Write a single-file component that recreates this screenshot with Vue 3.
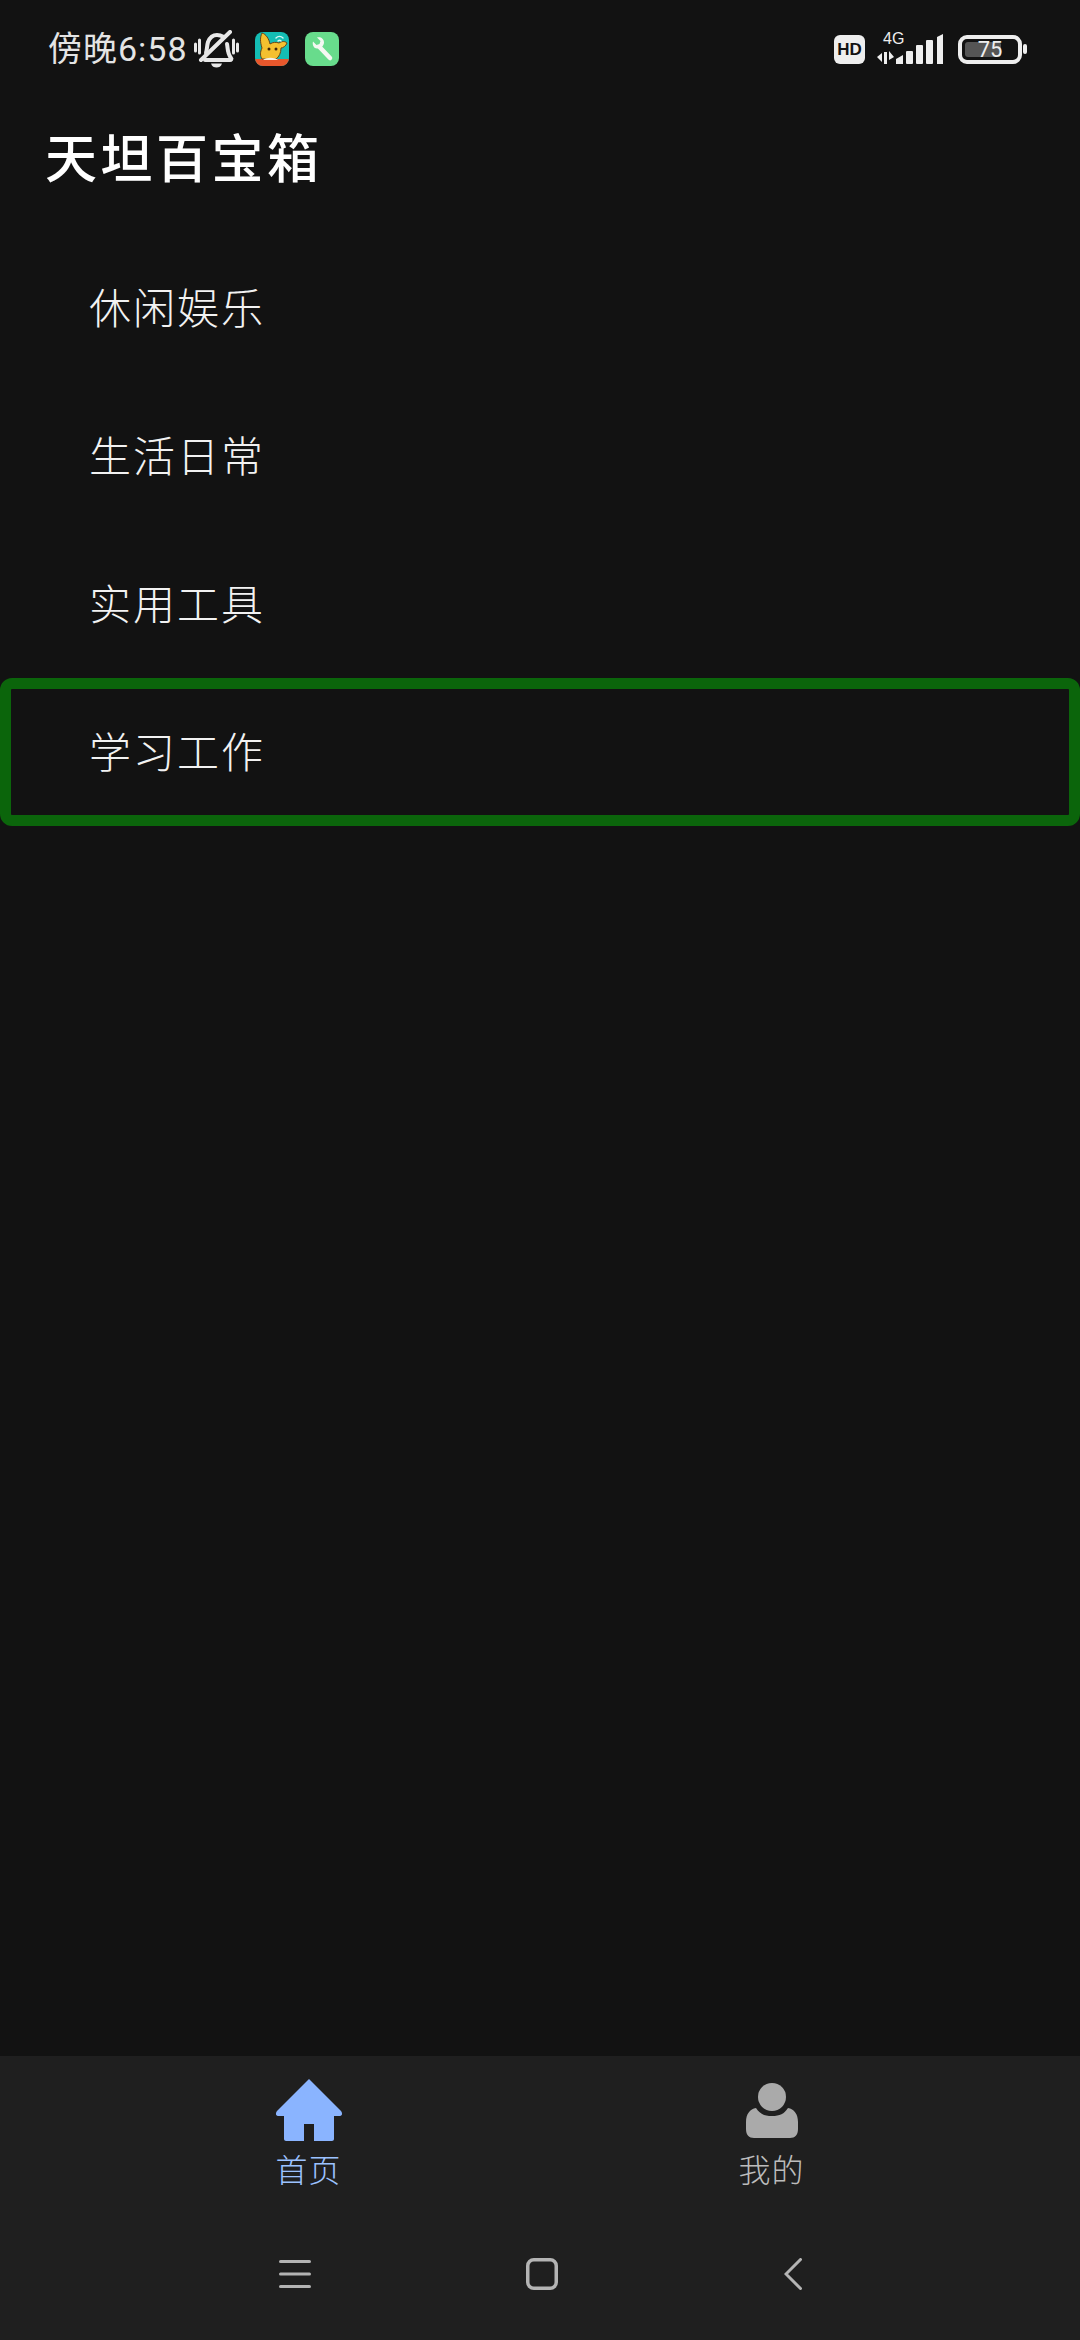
<template>
  <div class="page">
    <div class="status-bar">
      <div class="status-left">
        <span class="time">傍晚6:58</span>
        <svg class="bell" width="45" height="38" viewBox="0 0 45 38" fill="none" stroke="#e8e8e8">
          <path d="M1.500 14v7M5.500 10v13M39.500 10v13M43.500 14v7" stroke-width="3" stroke-linecap="round" />
          <path d="M12 23c1-3 1-8 2-11 2-5 6-7 9-7 3 0 5 1 7 2M33 14c1 4 0 9 4 14 1 1 0 2-1 2H11" stroke-width="4" stroke-linecap="round" stroke-linejoin="round" />
          <path d="M7 30 36 2" stroke-width="4" stroke-linecap="round" />
          <path d="M17 33.500h11c-1 3-3 4-5.500 4s-4.500-1-5.500-4z" fill="#e8e8e8" stroke="none" />
        </svg>
        <svg class="app-icon" width="34" height="34" viewBox="0 0 34 34">
          <defs>
            <clipPath id="appClip"><rect width="34" height="34" rx="8" /></clipPath>
          </defs>
          <g clip-path="url(#appClip)">
            <rect width="34" height="34" fill="#14bdb4" />
            <path d="M0 27h34v7H0z" fill="#e8572c" />
            <path d="M7 1c4 1 7 6 8 11 3-2 6-2 9-1 3-2 6-2 8 0-1 3-4 5-6 5 0 5-2 9-5 11H7c-2-3-2-7 0-11C5 10 5 5 7 1z" fill="#f4c02f" stroke="#6b4216" stroke-width="1" />
            <path d="M8 28c3-3 12-3 15 0z" fill="#f7eee0" />
            <circle cx="14" cy="17" r="1.500" fill="#40260c" />
            <circle cx="21" cy="17" r="1.500" fill="#40260c" />
            <path d="M21 6c2-2 5-2 7 0M23 9c1-1 2-1 3 0" fill="none" stroke="#d6f6f2" stroke-width="1.500" stroke-linecap="round" />
          </g>
        </svg>
        <svg class="app-icon" width="34" height="34" viewBox="0 0 34 34">
          <rect width="34" height="34" rx="8" fill="#68dc8c" />
          <path d="M25 26 15 15.500" stroke="#f4f8f2" stroke-width="4.500" stroke-linecap="round" />
          <path d="M8 9.500l3.500 3.500 3-1 1-3-3.500-3.500c3.500-1 7 1 7 5 0 3-3 7-7 6-3 0-5-3.500-4-7z" fill="#f4f8f2" />
        </svg>
      </div>
      <div class="status-right">
        <div class="hd">HD</div>
        <div class="signal">
          <span class="net">4G</span>
          <svg width="67" height="30" viewBox="0 0 67 30" fill="#eeeeee">
            <path d="M0 23l5-4v9zM7 18h3v12H7zM12 17l5 6-5 3z" />
            <path d="M19 25l7-4v9h-7z" />
            <rect x="29" y="17" width="7" height="13" rx="1" />
            <rect x="39" y="11" width="7" height="19" rx="1" />
            <rect x="49" y="6" width="7" height="24" rx="1" />
            <path d="M60 3l6-3v30h-6z" />
          </svg>
        </div>
        <div class="battery">
          <div class="battery-body">
            <div class="battery-fill"></div>
            <span class="battery-num">75</span>
          </div>
          <div class="battery-tip"></div>
        </div>
      </div>
    </div>

    <h1 class="title">天坦百宝箱</h1>

    <div class="list">
      <div
        v-for="item in items"
        :key="item.name"
        :class="['row', { focused: item.focused }]"
      >
        {{ item.name }}
      </div>
    </div>

    <div class="bottom">
      <div class="tabs">
        <div class="tab active">
          <svg width="68" height="66" viewBox="0 0 68 66">
            <path d="M34 1 66 33c2 3 1 5-2 5h-5v23c0 1-1 2-2 2H39V46H29v17H11c-1 0-2-1-2-2V38H4c-3 0-4-2-2-5z" fill="#8ab4ff" />
          </svg>
          <span>首页</span>
        </div>
        <div class="tab">
          <svg width="68" height="66" viewBox="0 0 68 66">
            <path d="M18 30c4 6 8 8 16 8s12-2 16-8c6 1 10 6 10 14v7c0 6-3 9-8 9H16c-5 0-8-3-8-9v-7c0-8 4-13 10-14z" fill="#aaaaaa" />
            <circle cx="34" cy="19" r="14" fill="#aaaaaa" />
          </svg>
          <span>我的</span>
        </div>
      </div>
      <div class="nav">
        <svg width="32" height="28" viewBox="0 0 32 28" fill="#b4b4b4">
          <rect y="0" width="32" height="3" rx="1.500" />
          <rect y="12.500" width="32" height="3" rx="1.500" />
          <rect y="25" width="32" height="3" rx="1.500" />
        </svg>
        <svg width="32" height="32" viewBox="0 0 32 32" fill="none" stroke="#b4b4b4" stroke-width="3.500">
          <rect x="1.750" y="1.750" width="28.500" height="28.500" rx="6" />
        </svg>
        <svg width="18" height="32" viewBox="0 0 18 32" fill="none" stroke="#b4b4b4" stroke-width="3" stroke-linecap="round">
          <path d="M16.500 1.500 2 16l14.500 14.500" />
        </svg>
      </div>
    </div>
  </div>
</template>

<script setup>
import { ref } from 'vue';

const items = ref([
  { name: '休闲娱乐' },
  { name: '生活日常' },
  { name: '实用工具' },
  { name: '学习工作', focused: true },
]);
</script>

<style scoped>
.page {
  display: flex;
  flex-direction: column;
  width: 1080px;
  height: 2340px;
  overflow: hidden;
  background: #121212;
  color: #e6e6e6;
  font-family: "Noto Sans CJK SC", "Noto Sans", sans-serif;
}

.status-bar {
  display: flex;
  justify-content: space-between;
  align-items: center;
  height: 98px;
  padding: 0 53px 0 48px;
  box-sizing: border-box;
  flex-shrink: 0;
}

.status-left,
.status-right {
  display: flex;
  align-items: center;
}

.time {
  font-family: Roboto, "Noto Sans CJK SC", sans-serif;
  font-size: 34px;
  line-height: 40px;
  letter-spacing: 1px;
  color: #e4e4e4;
}

.bell {
  margin-left: 6px;
}

.app-icon {
  margin-left: 16px;
}

.hd {
  width: 31px;
  height: 29px;
  border-radius: 6px;
  background: #eeeeee;
  color: #121212;
  font-size: 17px;
  font-weight: 900;
  line-height: 29px;
  text-align: center;
  font-family: "Liberation Sans", sans-serif;
}

.signal {
  position: relative;
  width: 67px;
  height: 30px;
  margin-left: 12px;
}

.signal svg {
  display: block;
}

.net {
  position: absolute;
  left: 6px;
  top: -3px;
  font-size: 16px;
  line-height: 16px;
  color: #eeeeee;
  font-family: "Liberation Sans", sans-serif;
}

.battery {
  display: flex;
  align-items: center;
  margin-left: 14px;
}

.battery-body {
  position: relative;
  width: 64px;
  height: 29px;
  border: 4px solid #eeeeee;
  border-radius: 9px;
  box-sizing: border-box;
}

.battery-fill {
  width: 36px;
  height: 15px;
  margin: 3px 0 0 3px;
  border-radius: 3px;
  background: #555555;
}

.battery-num {
  position: absolute;
  inset: 0;
  font-size: 22px;
  line-height: 21px;
  text-align: center;
  color: #eeeeee;
  font-family: "Roboto", sans-serif;
}

.battery-tip {
  width: 4px;
  height: 10px;
  margin-left: 1px;
  border-radius: 2px;
  background: #eeeeee;
}

.title {
  height: 136px;
  margin: 0;
  padding: 21px 0 0 45px;
  box-sizing: border-box;
  flex-shrink: 0;
  font-size: 52px;
  font-weight: 500;
  line-height: 74px;
  letter-spacing: 3.500px;
  color: #ffffff;
}

.list {
  flex: 1;
}

.row {
  display: flex;
  align-items: center;
  height: 148px;
  padding: 0 0 5px 78px;
  border: 11px solid transparent;
  border-radius: 12px;
  box-sizing: border-box;
  font-size: 42px;
  font-weight: 300;
  letter-spacing: 2px;
  color: #f2f2f2;
}

.row.focused {
  border-color: #0b650b;
}

.bottom {
  height: 284px;
  flex-shrink: 0;
  background: #1f1f1f;
}

.tabs {
  display: flex;
  padding: 22px 77px 0;
}

.tab {
  flex: 1;
  display: flex;
  flex-direction: column;
  align-items: center;
  color: #bcbcbc;
  font-size: 32px;
  font-weight: 300;
  line-height: 40px;
  letter-spacing: 1px;
}

.tab svg {
  display: block;
  margin-bottom: 4px;
}

.tab.active {
  color: #9cc2ff;
}

.nav {
  display: flex;
  justify-content: center;
  align-items: center;
  gap: 215px;
  margin-top: 70px;
}

.nav svg {
  display: block;
}

.nav svg:last-child {
  margin-left: 11px;
}
</style>

<style>
html,
body {
  margin: 0;
  background: #121212;
}
</style>
